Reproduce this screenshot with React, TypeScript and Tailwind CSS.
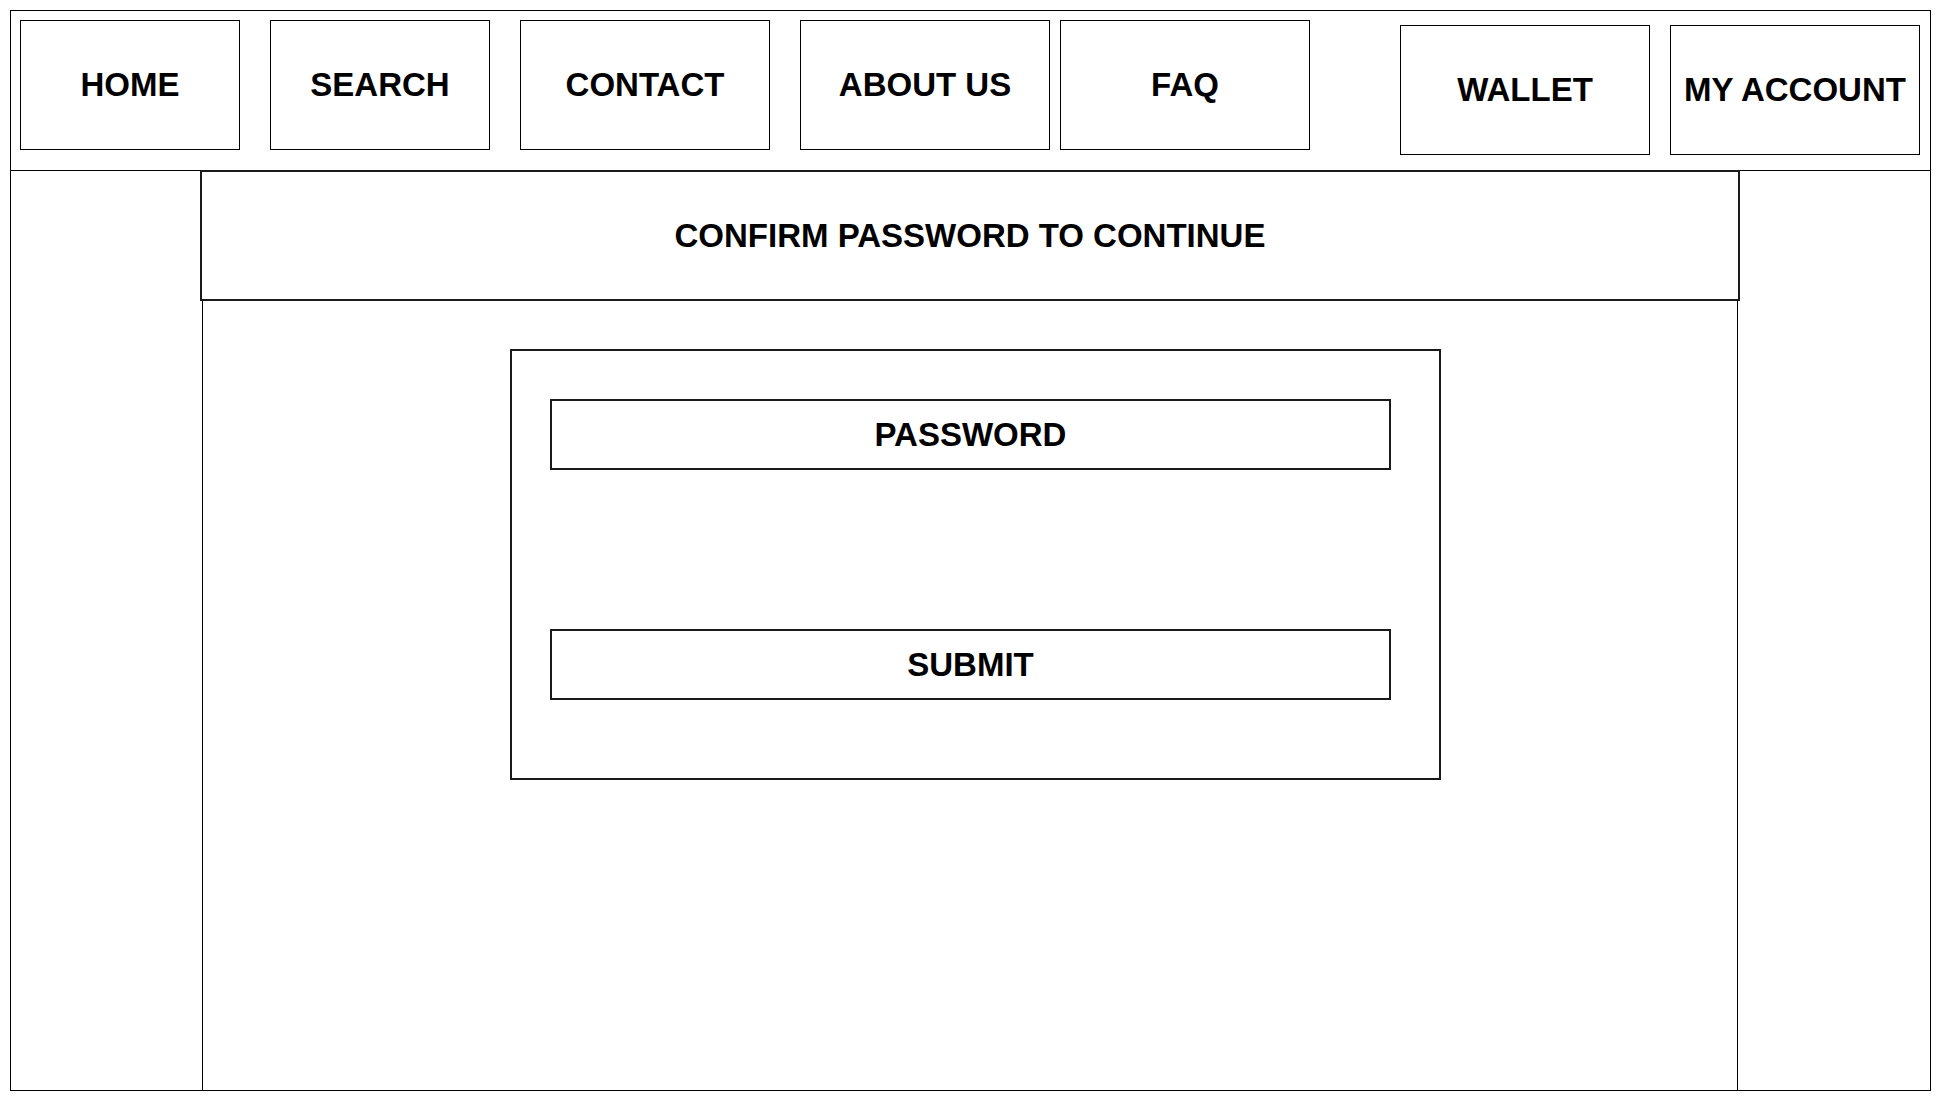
const navLeft = [
  { label: 'HOME', cls: 'ml-[9px] w-[220px]' },
  { label: 'SEARCH', cls: 'ml-[30px] w-[220px]' },
  { label: 'CONTACT', cls: 'ml-[30px] w-[250px]' },
  { label: 'ABOUT US', cls: 'ml-[30px] w-[250px]' },
  { label: 'FAQ', cls: 'ml-[10px] w-[250px]' },
]

const navRight = [
  { label: 'WALLET', cls: 'ml-[90px] w-[250px]' },
  { label: 'MY ACCOUNT', cls: 'ml-[20px] w-[250px]' },
]

function NavBox({ label, className }: { label: string; className: string }) {
  return (
    <div className={`flex h-[130px] shrink-0 items-center justify-center border border-black ${className}`}>
      {label}
    </div>
  )
}

function Field({ label }: { label: string }) {
  return (
    <div className="flex h-[71px] w-[841px] items-center justify-center border-2 border-[#1a1a1a]">
      {label}
    </div>
  )
}

export default function App() {
  return (
    <div
      className="h-[1101px] w-[1941px] bg-white pl-[10px] pt-[10px] text-[33px] font-bold text-black"
      style={{ fontFamily: '"Liberation Sans", Arial, sans-serif' }}
    >
      <div className="flex h-[1081px] w-[1921px] flex-col border border-black">
        {/* Top nav */}
        <div className="flex h-[160px] shrink-0 items-start border-b border-black">
          {navLeft.map((item) => (
            <NavBox key={item.label} label={item.label} className={`mt-[9px] ${item.cls}`} />
          ))}
          {navRight.map((item) => (
            <NavBox key={item.label} label={item.label} className={`mt-[14px] ${item.cls}`} />
          ))}
        </div>

        {/* Main */}
        <div className="flex flex-1">
          <div className="ml-[189px] flex w-[1540px] flex-col">
            <div className="-mt-px flex h-[131px] items-center justify-center border-2 border-[#1a1a1a]">
              CONFIRM PASSWORD TO CONTINUE
            </div>
            <div className="mx-[2px] flex-1 border-x border-black">
              <div className="ml-[307px] mt-[48px] flex h-[431px] w-[931px] flex-col border-2 border-[#1a1a1a] pl-[38px] pt-[48px]">
                <Field label="PASSWORD" />
                <div className="h-[159px]" />
                <Field label="SUBMIT" />
              </div>
            </div>
          </div>
        </div>
      </div>
    </div>
  )
}
